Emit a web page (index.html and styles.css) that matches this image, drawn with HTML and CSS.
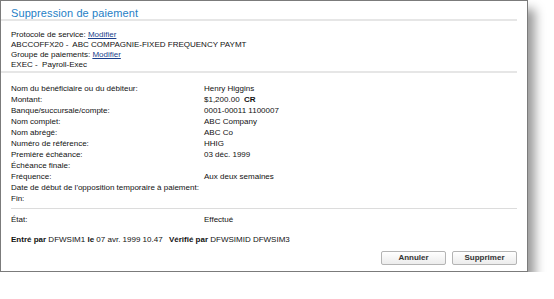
FILE: index.html
```html
<!DOCTYPE html>
<html lang="fr">
<head>
  <meta charset="UTF-8" />
  <title>Suppression de paiement</title>
  <link rel="stylesheet" href="styles.css">
</head>
<body>
  <div class="dialog">
    <h1 class="title">Suppression de paiement</h1>

    <div class="service">
      <div>Protocole de service: <a href="#">Modifier</a></div>
      <div>ABCCOFFX20 -&nbsp; ABC COMPAGNIE-FIXED FREQUENCY PAYMT</div>
      <div>Groupe de paiements: <a href="#">Modifier</a></div>
      <div>EXEC -&nbsp; Payroll-Exec</div>
    </div>

    <div class="details">
      <span>Nom du bénéficiaire ou du débiteur:</span><span>Henry Higgins</span>
      <span>Montant:</span><span>$1,200.00&nbsp; <b>CR</b></span>
      <span>Banque/succursale/compte:</span><span>0001-00011 1100007</span>
      <span>Nom complet:</span><span>ABC Company</span>
      <span>Nom abrégé:</span><span>ABC Co</span>
      <span>Numéro de référence:</span><span>HHIG</span>
      <span>Première échéance:</span><span>03 déc. 1999</span>
      <span>Échéance finale:</span><span></span>
      <span>Fréquence:</span><span>Aux deux semaines</span>
      <span>Date de début de l'opposition temporaire à paiement:</span><span></span>
      <span>Fin:</span><span></span>
    </div>

    <div class="details state">
      <span>État:</span><span>Effectué</span>
    </div>

    <div class="audit">
      <b>Entré par</b> DFWSIM1 <b>le</b> 07 avr. 1999 10.47
      <span class="checked"><b>Vérifié par</b> DFWSIMID DFWSIM3</span>
    </div>

    <div class="actions">
      <button>Annuler</button>
      <button>Supprimer</button>
    </div>
  </div>
</body>
</html>
```

FILE: styles.css
```css
* {
  margin: 0;
  padding: 0;
  box-sizing: border-box;
}

body {
  background: #fff;
  font-family: 'Liberation Sans', Arial, sans-serif;
  font-size: 8px;
  color: #111;
}

.dialog {
  width: 528px;
  height: 272px;
  border: 1px solid #7b7b7b;
  background: #fff;
  box-shadow: 7px 9px 10px rgba(0, 0, 0, 0.4);
  padding: 0 10px 0 10px;
}

.title {
  font-size: 11px;
  font-weight: normal;
  color: #1f80c6;
  height: 20px;
  padding-top: 6px;
  margin: 0 0 0 -10px;
  padding-left: 10px;
  border-bottom: 2px solid #e6e6e6;
  letter-spacing: 0.1px;
}

.service {
  margin: 0 0 0 -10px;
  padding: 9px 0 1px 10px;
  line-height: 10px;
  border-bottom: 2px solid #e6e6e6;
}

.service a {
  color: #1a3f8c;
}

.details {
  display: grid;
  grid-template-columns: 193px auto;
  line-height: 11.1px;
  padding-top: 9.5px;
  white-space: nowrap;
}

.state {
  border-top: 1px solid #dcdcdc;
  margin-top: 3.5px;
  padding-top: 4.5px;
}

.audit {
  margin-top: 9px;
  line-height: 11px;
}

.checked {
  margin-left: 4px;
}

.actions {
  display: flex;
  justify-content: flex-end;
  gap: 6px;
  margin-top: 6px;
}

.actions button {
  width: 65px;
  height: 14px;
  font-family: 'Liberation Sans', Arial, sans-serif;
  font-size: 8px;
  font-weight: bold;
  color: #333;
  border: 1px solid #b4b4b4;
  border-radius: 2px;
  background: linear-gradient(#ffffff, #ececec);
}
```
